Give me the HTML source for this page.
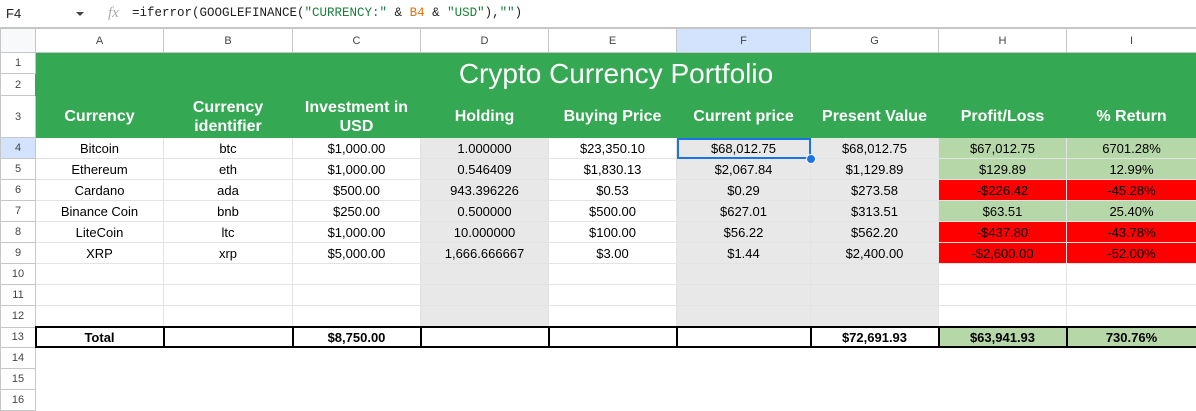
<!DOCTYPE html>
<html><head><meta charset="utf-8"><style>
body{margin:0;width:1196px;height:407px;overflow:hidden;background:#fff;font-family:"Liberation Sans",Arial,sans-serif;}
.fb{position:absolute;left:0;top:0;width:1196px;height:28px;border-bottom:1px solid #c4c7c5;box-sizing:border-box;font-size:13px;}
.fb .nm{position:absolute;left:6px;top:6px;color:#1f1f1f;}
.fb .dd{position:absolute;left:76px;top:12px;width:0;height:0;border-left:4px solid transparent;border-right:4px solid transparent;border-top:4px solid #444;}
.fb .fx{position:absolute;left:108px;top:5px;color:#aaa;font-style:italic;font-family:"Liberation Serif",serif;font-size:15px;}
.fb .f{position:absolute;left:132px;top:6px;font-family:"Liberation Mono",monospace;font-size:12.5px;color:#1f1f1f;}
.g{color:#188038}.o{color:#e8710a}
table{position:absolute;left:0;top:28px;border-collapse:collapse;table-layout:fixed;width:1196px;}
td{border:1px solid #e2e3e3;padding:0;text-align:center;font-size:13px;color:#000;overflow:hidden;white-space:nowrap;}
tr.ch td{height:23px;border-color:#c4c7c5;color:#444;font-size:11px;}
td.rn{color:#444;font-size:11px;border-color:#c4c7c5;}
.gr{background:#34a853;border-color:#34a853;color:#fff;}
.hd td.gr{font-weight:bold;font-size:16px;line-height:19px;white-space:normal;}
.gy{background:#e8e8e8;}
.lg{background:#b6d7a8;}
.rd{background:#ff0000;}
tr.r td{height:20px;}
tr.t td{height:18px;border:2px solid #000;font-weight:bold;}
tr.t td.rn{border:1px solid #c4c7c5;border-right:2px solid #000;font-weight:normal;}
.sel{outline:2px solid #1a73e8;outline-offset:-2px;}
.hl{background:#d3e3fd;}
</style></head><body>
<div class="fb"><span class="nm">F4</span><span class="dd"></span><span class="fx">fx</span><span class="f">=iferror(GOOGLEFINANCE(<span class="g">"CURRENCY:"</span> &amp; <span class="o">B4</span> &amp; <span class="g">"USD"</span>),<span class="g">""</span>)</span></div>
<table>
<colgroup><col style="width:35px"><col style="width:128px"><col style="width:129px"><col style="width:128px"><col style="width:128px"><col style="width:128px"><col style="width:134px"><col style="width:128px"><col style="width:128px"><col style="width:130px"></colgroup>
<tr class="ch"><td style="background:#f8f9fa"></td><td>A</td><td>B</td><td>C</td><td>D</td><td>E</td><td class="hl">F</td><td>G</td><td>H</td><td>I</td></tr>
<tr><td class="rn" style="height:20px">1</td><td class="gr" colspan="9" rowspan="2" style="font-size:28px;padding-top:0px">Crypto Currency Portfolio</td></tr>
<tr><td class="rn" style="height:21px">2</td></tr>
<tr class="hd"><td class="rn" style="height:41px">3</td><td class="gr">Currency</td><td class="gr">Currency<br>identifier</td><td class="gr">Investment in<br>USD</td><td class="gr">Holding</td><td class="gr">Buying Price</td><td class="gr">Current price</td><td class="gr">Present Value</td><td class="gr">Profit/Loss</td><td class="gr">% Return</td></tr>
<tr class="r"><td class="rn hl">4</td><td>Bitcoin</td><td>btc</td><td>$1,000.00</td><td class="gy">1.000000</td><td>$23,350.10</td><td class="gy sel" style="position:relative">$68,012.75</td><td class="gy">$68,012.75</td><td class="lg">$67,012.75</td><td class="lg">6701.28%</td></tr>
<tr class="r"><td class="rn">5</td><td>Ethereum</td><td>eth</td><td>$1,000.00</td><td class="gy">0.546409</td><td>$1,830.13</td><td class="gy">$2,067.84</td><td class="gy">$1,129.89</td><td class="lg">$129.89</td><td class="lg">12.99%</td></tr>
<tr class="r"><td class="rn">6</td><td>Cardano</td><td>ada</td><td>$500.00</td><td class="gy">943.396226</td><td>$0.53</td><td class="gy">$0.29</td><td class="gy">$273.58</td><td class="rd">-$226.42</td><td class="rd">-45.28%</td></tr>
<tr class="r"><td class="rn">7</td><td>Binance Coin</td><td>bnb</td><td>$250.00</td><td class="gy">0.500000</td><td>$500.00</td><td class="gy">$627.01</td><td class="gy">$313.51</td><td class="lg">$63.51</td><td class="lg">25.40%</td></tr>
<tr class="r"><td class="rn">8</td><td>LiteCoin</td><td>ltc</td><td>$1,000.00</td><td class="gy">10.000000</td><td>$100.00</td><td class="gy">$56.22</td><td class="gy">$562.20</td><td class="rd">-$437.80</td><td class="rd">-43.78%</td></tr>
<tr class="r"><td class="rn">9</td><td>XRP</td><td>xrp</td><td>$5,000.00</td><td class="gy">1,666.666667</td><td>$3.00</td><td class="gy">$1.44</td><td class="gy">$2,400.00</td><td class="rd">-$2,600.00</td><td class="rd">-52.00%</td></tr>
<tr class="r"><td class="rn">10</td><td></td><td></td><td></td><td class="gy"></td><td></td><td class="gy"></td><td class="gy"></td><td></td><td></td></tr>
<tr class="r"><td class="rn">11</td><td></td><td></td><td></td><td class="gy"></td><td></td><td class="gy"></td><td class="gy"></td><td></td><td></td></tr>
<tr class="r"><td class="rn">12</td><td></td><td></td><td></td><td class="gy"></td><td></td><td class="gy"></td><td class="gy"></td><td></td><td></td></tr>
<tr class="t"><td class="rn">13</td><td>Total</td><td></td><td>$8,750.00</td><td></td><td></td><td></td><td>$72,691.93</td><td class="lg">$63,941.93</td><td class="lg">730.76%</td></tr>
<tr class="r"><td class="rn">14</td><td colspan="9" style="border:none"></td></tr>
<tr class="r"><td class="rn">15</td><td colspan="9" style="border:none"></td></tr>
<tr class="r"><td class="rn">16</td><td colspan="9" style="border:none"></td></tr>
</table>
<div style="position:absolute;left:806px;top:154px;width:8px;height:8px;border-radius:50%;background:#1a73e8;border:1px solid #fff"></div>
</body></html>
